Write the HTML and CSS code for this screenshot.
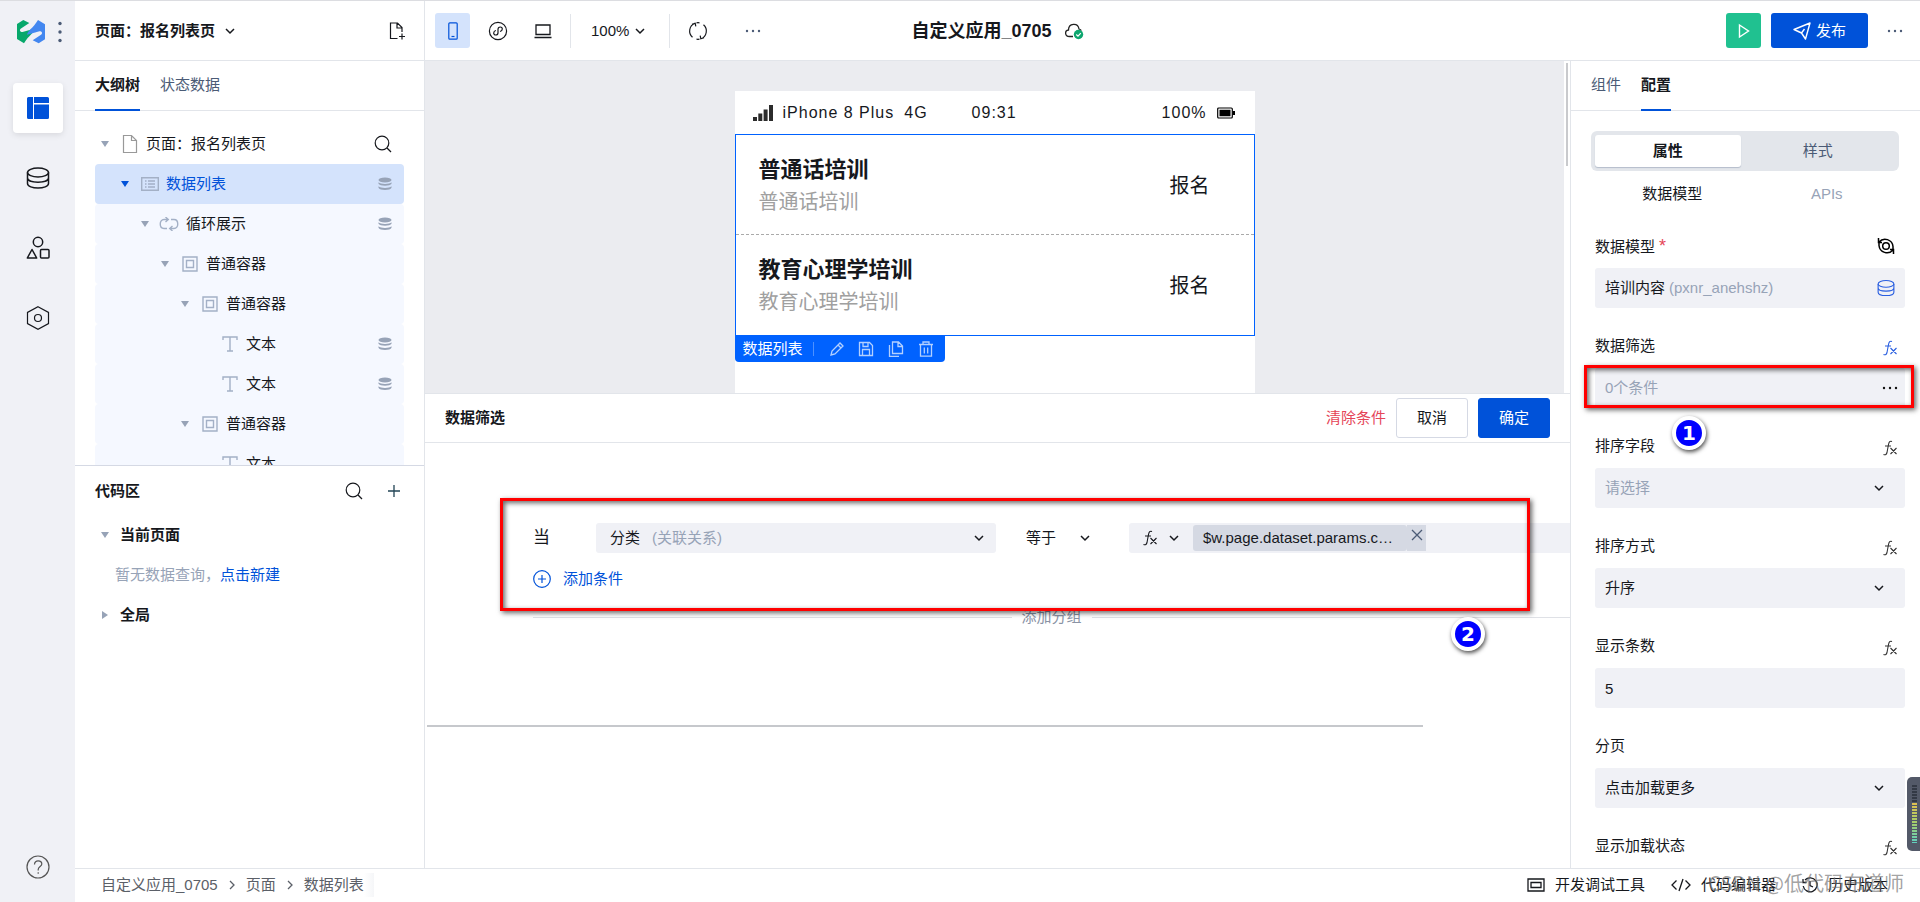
FILE: index.html
```html
<!DOCTYPE html>
<html lang="zh-CN">
<head>
<meta charset="utf-8">
<title>自定义应用_0705</title>
<link rel="stylesheet" href="styles.css">
</head>
<body>
<svg class="sprite" aria-hidden="true">
  <symbol id="chevron" viewBox="0 0 10 10"><path d="M1 3l4 4 4-4" fill="none" stroke="currentColor" stroke-width="1.500"/></symbol>
  <symbol id="next" viewBox="0 0 10 10"><path d="M3 1l4 4-4 4" fill="none" stroke="currentColor" stroke-width="1.300"/></symbol>
  <symbol id="caret" viewBox="0 0 8 8"><path d="M0 1h8L4 7z" fill="currentColor"/></symbol>
  <symbol id="caret-right" viewBox="0 0 8 8"><path d="M1 0v8l6-4z" fill="currentColor"/></symbol>
  <symbol id="dots" viewBox="0 0 18 4"><g fill="currentColor"><circle cx="3" cy="2" r="1.200"/><circle cx="9" cy="2" r="1.200"/><circle cx="15" cy="2" r="1.200"/></g></symbol>
  <symbol id="search" viewBox="0 0 18 18"><g fill="none" stroke="currentColor" stroke-width="1.200"><circle cx="8" cy="8" r="6.800"/><path d="M13 13l4 4"/></g></symbol>
  <symbol id="file" viewBox="0 0 16 20"><path d="M1.500 1.500h8l5 5v12h-13zM9.500 1.500v5h5" fill="none" stroke="currentColor" stroke-width="1.200"/></symbol>
  <symbol id="stack" viewBox="0 0 14 14"><g fill="currentColor"><ellipse cx="7" cy="3" rx="6.500" ry="2.500"/><path d="M.5 5.300c2 2.200 11 2.200 13 0v1.500c-1 2.600-12 2.600-13 0zM.5 9.300c2 2.200 11 2.200 13 0v1.500c-1 2.900-12 2.900-13 0z"/></g></symbol>
  <symbol id="database" viewBox="0 0 24 24"><g fill="none" stroke="currentColor" stroke-width="1.500"><ellipse cx="12" cy="6.500" rx="10.500" ry="4.500"/><path d="M1.500 6.500v11c0 6 21 6 21 0v-11M1.500 12c0 5.500 21 5.500 21 0"/></g></symbol>
  <symbol id="box" viewBox="0 0 16 16"><g fill="none" stroke="currentColor" stroke-width="1.400"><path d="M1 1h14v14H1z"/><path d="M4.500 4.500h7v7h-7z"/></g></symbol>
  <symbol id="letter" viewBox="0 0 16 16"><path d="M1 4V1h14v3M8 1v14M5 15h6" fill="none" stroke="currentColor" stroke-width="1.400"/></symbol>
  <symbol id="fx" viewBox="0 0 14 16"><path d="M9 1.500c-2-1-3 .5-3.500 3l-1.500 8c-.5 2-1.500 2.800-3.500 2M2 6h6M7.500 8l6 6M13.500 8l-6 6" fill="none" stroke="currentColor" stroke-width="1.100"/></symbol>
</svg>

<div class="app">
  <nav class="rail" aria-label="主导航">
    <div class="brand">
      <svg width="28" height="24" viewBox="0 0 28 24" role="img" aria-label="微搭"><path id="wing" d="M0 4L6.300 0l6 3L4 8.500c-2 1.500-1 3.500 1.500 3.500L18 8.500C17 13 12 15 7 23.300L0 19z" fill="#07a86b"/><path d="M28 19.300l-6.300 4-6-3 8.300-5.500c2-1.500 1-3.500-1.500-3.500L10 14.800C11 10.300 16 8.300 21 0l7 4.300z" fill="#4387f0"/></svg>
      <button class="icon-btn slate" aria-label="更多"><svg width="4" height="22" viewBox="0 0 4 22" fill="currentColor"><circle cx="2" cy="2.500" r="1.700"/><circle cx="2" cy="11" r="1.700"/><circle cx="2" cy="19.500" r="1.700"/></svg></button>
    </div>
    <button class="rail-btn active" aria-label="页面"><svg width="22" height="22" viewBox="0 0 22 22"><path d="M1.500 0H6v22H1.500Q0 22 0 20.500v-19Q0 0 1.500 0zM7 0h13.500Q22 0 22 1.500V6H7zM7 7.500h15v13q0 1.500-1.500 1.500H7z" fill="#0052d9"/></svg></button>
    <button class="rail-btn" aria-label="数据源"><svg width="24" height="24"><use href="#database"/></svg></button>
    <button class="rail-btn" aria-label="组件"><svg width="24" height="24" viewBox="0 0 24 24" fill="none" stroke="currentColor" stroke-width="1.500" stroke-linejoin="round"><circle cx="12" cy="6" r="4.700"/><path d="M6 13.500l4.700 8.500H1.300z"/><rect x="14.500" y="13.500" width="8.500" height="8.500" rx="1"/></svg></button>
    <button class="rail-btn" aria-label="设置"><svg width="24" height="24" viewBox="0 0 24 24" fill="none" stroke="currentColor" stroke-width="1.200"><path d="M12 .8l10.500 5.600v11.200L12 23.200 1.500 17.600V6.400z"/><circle cx="12" cy="12" r="3.500"/></svg></button>
    <button class="rail-btn help" aria-label="帮助"><svg width="24" height="24" viewBox="0 0 24 24" fill="none" stroke="#555" stroke-width="1.200"><circle cx="12" cy="12" r="11"/><path d="M8.500 9.500c0-5 7.300-4.300 7.300-.5 0 2.500-3.600 2.600-3.600 5.500v1M12.200 17.200v1.600"/></svg></button>
  </nav>

  <div class="main">
    <header class="topbar">
      <div class="lead">
        <div class="page-head">
          <button class="page-name">页面：报名列表页 <svg width="10" height="10"><use href="#chevron"/></svg></button>
          <button class="icon-btn" aria-label="新建页面"><svg width="18" height="18" viewBox="0 0 18 18" fill="none" stroke="currentColor" stroke-width="1.200"><path d="M9.500 16.500H2.500V1h7l4.500 4.500v4.500M9 1v5h5M14 11.500v6M11 14.500h6"/></svg></button>
        </div>
        <div class="tools">
          <button class="tool on" aria-label="手机"><svg width="10" height="18" viewBox="0 0 10 18" fill="none" stroke="#0052d9" stroke-width="1.200"><rect x=".8" y=".8" width="8.400" height="16.400" rx="1"/><path d="M3.500 14.500h3"/></svg></button>
          <button class="tool" aria-label="小程序"><svg width="20" height="20" viewBox="0 0 20 20" fill="none" stroke="currentColor" stroke-width="1.200"><circle cx="10" cy="10" r="8.600"/><path d="M8 9.500c-3 .5-3 4.500-.3 4.500 1.300 0 2.300-1 2.300-2.300V8.300C10 7 11 6 12.300 6c2.700 0 2.700 4-.3 4.500"/></svg></button>
          <button class="tool" aria-label="电脑"><svg width="20" height="16" viewBox="0 0 20 16" fill="none" stroke="currentColor" stroke-width="1.300"><path d="M3 2h14v9.500H3zM1.500 14.500h17"/></svg></button>
          <span class="rule"></span>
          <button class="zoom">100% <svg width="10" height="10"><use href="#chevron"/></svg></button>
          <span class="rule"></span>
          <button class="tool" aria-label="刷新"><svg width="20" height="20" viewBox="0 0 20 20" fill="none" stroke="currentColor" stroke-width="1.200"><path d="M7 2.200a8.300 8.300 0 0 0-2.500 14M8.500 18.200c1 .2 2 .2 3 0M13 17.800a8.300 8.300 0 0 0 2.500-14M11.500 1.800c-1-.2-2-.2-3 0M4 3.200L7.200 2.200 7.800 5.400M16 16.800l-3.200 1-.6-3.200"/></svg></button>
          <button class="tool slate" aria-label="更多工具"><svg width="18" height="4"><use href="#dots"/></svg></button>
        </div>
      </div>
      <h1 class="app-name">自定义应用_0705 <svg width="20" height="18" viewBox="0 0 20 18"><path d="M9 14.500H5.500C.5 14.500.5 8.500 4.500 8c0-7 9.500-7.500 10.500-1 1 .3 1.800.8 2.300 1.600" fill="none" stroke="#222" stroke-width="1.300"/><circle cx="14.500" cy="12.500" r="4.700" fill="#0ca66e"/><path d="M12.300 12.500l1.700 1.700 2.800-3" fill="none" stroke="#fff" stroke-width="1.200"/></svg></h1>
      <div class="actions">
        <button class="run" aria-label="预览"><svg width="12" height="16" viewBox="0 0 12 16"><path d="M1.500 2l9 6-9 6z" fill="none" stroke="#fff" stroke-width="1.400"/></svg></button>
        <button class="publish"><svg width="18" height="18" viewBox="0 0 18 18" fill="none" stroke="#fff" stroke-width="1.400" stroke-linejoin="round"><path d="M1 7.500L17 1l-4.500 16-4-6zM8.500 11l3-4M1 7.500l7.500 3.500"/></svg>发布</button>
        <button class="icon-btn slate" aria-label="更多操作"><svg width="18" height="4"><use href="#dots"/></svg></button>
      </div>
    </header>

    <div class="workspace">
      <aside class="outline">
        <div class="tabs" role="tablist">
          <button class="tab current" role="tab" aria-selected="true">大纲树</button>
          <button class="tab" role="tab">状态数据</button>
        </div>
        <div class="tree">
          <div class="node root"><svg class="caret" width="8" height="8"><use href="#caret"/></svg><svg class="file" width="16" height="20"><use href="#file"/></svg><span>页面：报名列表页</span><button class="icon-btn end" aria-label="搜索"><svg width="18" height="18"><use href="#search"/></svg></button></div>
          <div class="node d1 selected"><svg class="caret" width="8" height="8"><use href="#caret"/></svg><svg class="kind" width="18" height="14" viewBox="0 0 18 14" fill="none" stroke="currentColor" stroke-width="1.400"><path d="M.7.700h16.600v12.600H.7zM4 4h1.500M4 7h1.500M4 10h1.500M7 4h7M7 7h7M7 10h7"/></svg><span>数据列表</span><svg class="bound end" width="14" height="14"><use href="#stack"/></svg></div>
          <div class="node d2"><svg class="caret" width="8" height="8"><use href="#caret"/></svg><svg class="kind" width="20" height="14" viewBox="0 0 20 14" fill="none" stroke="currentColor" stroke-width="1.400"><path d="M8 11.500H5C0 11.500 0 2.500 5 2.500h4M6.500 0l2.800 2.500L6.500 5M12 2.500h3c5 0 5 9 0 9h-4M13.500 9l-2.800 2.500 2.800 2.500"/></svg><span>循环展示</span><svg class="bound end" width="14" height="14"><use href="#stack"/></svg></div>
          <div class="node d3"><svg class="caret" width="8" height="8"><use href="#caret"/></svg><svg class="kind" width="16" height="16"><use href="#box"/></svg><span>普通容器</span></div>
          <div class="node d4"><svg class="caret" width="8" height="8"><use href="#caret"/></svg><svg class="kind" width="16" height="16"><use href="#box"/></svg><span>普通容器</span></div>
          <div class="node leaf"><svg class="kind" width="16" height="16"><use href="#letter"/></svg><span>文本</span><svg class="bound end" width="14" height="14"><use href="#stack"/></svg></div>
          <div class="node leaf"><svg class="kind" width="16" height="16"><use href="#letter"/></svg><span>文本</span><svg class="bound end" width="14" height="14"><use href="#stack"/></svg></div>
          <div class="node d4"><svg class="caret" width="8" height="8"><use href="#caret"/></svg><svg class="kind" width="16" height="16"><use href="#box"/></svg><span>普通容器</span></div>
          <div class="node leaf"><svg class="kind" width="16" height="16"><use href="#letter"/></svg><span>文本</span></div>
        </div>
        <section class="code">
          <header class="code-head"><h2>代码区</h2>
            <button class="icon-btn" aria-label="搜索代码"><svg width="18" height="18"><use href="#search"/></svg></button>
            <button class="icon-btn" aria-label="添加代码"><svg width="12" height="12" viewBox="0 0 12 12"><path d="M6 0v12M0 6h12" stroke="#245" stroke-width="1.300"/></svg></button>
          </header>
          <div class="code-row"><svg class="caret" width="8" height="8"><use href="#caret"/></svg>当前页面</div>
          <p class="code-empty">暂无数据查询，<a href="#new">点击新建</a></p>
          <div class="code-row"><svg class="caret" width="8" height="8"><use href="#caret-right"/></svg>全局</div>
        </section>
      </aside>

      <main class="stage">
        <div class="canvas">
          <div class="backdrop">
            <div class="phone">
              <div class="status">
                <svg width="20" height="16" viewBox="0 0 20 16" fill="#2b2b2b"><path d="M0 12h4v4H0zM5.300 8.500h4V16h-4zM10.600 4.500h4V16h-4zM16 0h4v16h-4z"/></svg>
                <span class="device">iPhone 8 Plus</span><span class="network">4G</span><span>09:31</span><span class="charge">100%</span>
                <svg width="18" height="12" viewBox="0 0 18 12"><rect x=".7" y="1" width="14.600" height="10" rx="1" fill="none" stroke="#000" stroke-width="1.200"/><path d="M2.500 2.800h11v6.400h-11zM15.500 4H18v4h-2.500z"/></svg>
              </div>
              <div class="list">
                <article class="item"><div><h3>普通话培训</h3><p>普通话培训</p></div><span>报名</span></article>
                <article class="item"><div><h3>教育心理学培训</h3><p>教育心理学培训</p></div><span>报名</span></article>
              </div>
              <div class="selection-bar">
                <span class="sel-name">数据列表</span>
                <button aria-label="编辑"><svg width="14" height="14" viewBox="0 0 14 14"><path d="M1 13l1-4 8-8 3 3-8 8zM8 3l3 3" /></svg></button>
                <button aria-label="保存"><svg width="16" height="16" viewBox="0 0 16 16"><path d="M1.500 1.500h10l3 3v10h-13zM4.500 14V8.500h7V14M5 1.500v4h5v-4"/></svg></button>
                <button aria-label="复制"><svg width="16" height="16" viewBox="0 0 16 16"><path d="M4.500 1h6l4 4v7.500h-10zM10 1v4.500h4.500M1.500 4v11.300H11"/></svg></button>
                <button aria-label="删除"><svg width="16" height="16" viewBox="0 0 16 16"><path d="M1 3.500h14M5 3.500V1h6v2.500M2.500 3.500v11.700h11V3.500M6.300 6.500v6M9.700 6.500v6"/></svg></button>
              </div>
            </div>
          </div>
          <div class="track"><span class="thumb"></span></div>
        </div>

        <section class="filter">
          <header class="filter-head">
            <h2>数据筛选</h2>
            <button class="clear">清除条件</button>
            <button class="btn">取消</button>
            <button class="btn primary">确定</button>
          </header>
          <div class="filter-body">
            <div class="condition">
              <span class="when">当</span>
              <button class="field-pick">分类<span class="muted">(关联关系)</span><svg width="10" height="10"><use href="#chevron"/></svg></button>
              <div class="select operator"><select aria-label="运算符"><option>等于</option></select><svg width="10" height="10"><use href="#chevron"/></svg></div>
              <div class="value">
                <button class="mode" aria-label="表达式"><svg width="14" height="16"><use href="#fx"/></svg><svg width="10" height="10"><use href="#chevron"/></svg></button>
                <span class="chip">$w.page.dataset.params.c…</span><button class="chip-close" aria-label="移除"><svg width="12" height="12" viewBox="0 0 12 12"><path d="M1 1l10 10M11 1L1 11" stroke="currentColor" stroke-width="1.300"/></svg></button>
              </div>
            </div>
            <button class="add"><svg width="18" height="18" viewBox="0 0 18 18" fill="none" stroke="currentColor" stroke-width="1.200"><circle cx="9" cy="9" r="8.300"/><path d="M9 5v8M5 9h8"/></svg>添加条件</button>
            <div class="group"><button>添加分组</button></div>
            <div class="hscroll"></div>
            <div class="mark mark-filter"></div>
            <span class="badge badge-two">2</span>
          </div>
        </section>
      </main>

      <aside class="props">
        <div class="tabs" role="tablist">
          <button class="tab" role="tab">组件</button>
          <button class="tab current" role="tab" aria-selected="true">配置</button>
        </div>
        <div class="segment"><button class="on">属性</button><button class="off">样式</button></div>
        <div class="source"><button class="on">数据模型</button><button>APIs</button></div>
        <form class="form">
          <div class="row"><span class="label">数据模型<i>*</i></span><svg class="swap" width="18" height="18" viewBox="0 0 18 18" fill="none" stroke="#000" stroke-width="1.500"><path d="M1.500 1v4.500H5M2 5a8 8 0 0 1 14 4.500V14M16.500 17v-4.500H13M16 13A8 8 0 0 1 2 8.500V6"/><circle cx="9" cy="9" r="3.300"/></svg></div>
          <button type="button" class="input model">培训内容 <span class="muted">(pxnr_anehshz)</span><svg width="18" height="18"><use href="#database"/></svg></button>

          <div class="row"><span class="label">数据筛选</span><svg class="fx on" width="14" height="16"><use href="#fx"/></svg></div>
          <div class="marked"><button type="button" class="input rules muted">0个条件<svg width="18" height="4"><use href="#dots"/></svg></button><div class="mark mark-rules"></div><span class="badge badge-one">1</span></div>

          <div class="row"><label for="sort">排序字段</label><svg class="fx" width="14" height="16"><use href="#fx"/></svg></div>
          <div class="select"><select id="sort" class="input muted"><option>请选择</option></select><svg width="10" height="10"><use href="#chevron"/></svg></div>

          <div class="row"><label for="order">排序方式</label><svg class="fx" width="14" height="16"><use href="#fx"/></svg></div>
          <div class="select"><select id="order" class="input"><option>升序</option></select><svg width="10" height="10"><use href="#chevron"/></svg></div>

          <div class="row"><label for="count">显示条数</label><svg class="fx" width="14" height="16"><use href="#fx"/></svg></div>
          <input id="count" class="input" type="text" value="5">

          <div class="row"><label for="paging">分页</label></div>
          <div class="select"><select id="paging" class="input"><option>点击加载更多</option></select><svg width="10" height="10"><use href="#chevron"/></svg></div>

          <div class="row"><span class="label">显示加载状态</span><svg class="fx" width="14" height="16"><use href="#fx"/></svg></div>
        </form>
        <div class="meter"><span></span></div>
      </aside>
    </div>

    <footer class="footer">
      <nav class="crumbs" aria-label="路径"><a href="#app">自定义应用_0705</a><svg width="10" height="10"><use href="#next"/></svg><a href="#page">页面</a><svg width="10" height="10"><use href="#next"/></svg><a class="last" href="#list">数据列表</a></nav>
      <div class="links">
        <button><svg width="18" height="14" viewBox="0 0 18 14" fill="none" stroke="currentColor" stroke-width="1.300"><path d="M1 1h16v12H1zM4 4.500h10v5H4z"/></svg>开发调试工具</button>
        <button><svg width="20" height="14" viewBox="0 0 20 14" fill="none" stroke="currentColor" stroke-width="1.300"><path d="M5.500 2.500L1 7l4.500 4.500M14.500 2.500L19 7l-4.500 4.500M12 1L8 13"/></svg>代码编辑器</button>
        <button><svg width="16" height="16" viewBox="0 0 16 16" fill="none" stroke="currentColor" stroke-width="1.300"><path d="M3 3a7 7 0 1 1-1.800 6M1 2v3.500h3.500M8 4v4.500l3 1.500"/></svg>历史版本</button>
      </div>
      <span class="watermark">CSDN @低代码布道师</span>
    </footer>
  </div>
</div>
</body>
</html>
```

FILE: styles.css
```css
* { box-sizing: border-box; }
body { margin: 0; font: 15px/20px "Liberation Sans", "Noto Sans CJK SC", sans-serif; color: #16181d; background: #fff; }
button, select, input { font: inherit; color: inherit; background: none; border: 0; padding: 0; margin: 0; }
h1, h2, h3, p { margin: 0; font-size: inherit; }
a { color: inherit; text-decoration: none; }
svg { display: block; flex: none; }
.sprite { position: absolute; width: 0; height: 0; }
.muted { color: #97a3b7; }
.slate { color: #4b5b76; }
.icon-btn { display: flex; align-items: center; }

.app { display: flex; height: 100vh; border-top: 1px solid #dcdde1; overflow: hidden; }

.rail { width: 75px; flex: none; display: flex; flex-direction: column; align-items: center; gap: 20px; padding-bottom: 10px; background: #f0f1f6; }
.brand { display: flex; align-items: center; gap: 13px; height: 62px; padding-left: 4px; }
.rail-btn { width: 50px; height: 50px; display: grid; place-items: center; border-radius: 4px; }
.rail-btn.active { background: #fff; box-shadow: 0 2px 6px rgba(0, 0, 0, .1); }
.rail-btn.help { margin-top: auto; }

.main { flex: 1; min-width: 0; display: flex; flex-direction: column; }

.topbar { height: 60px; flex: none; display: grid; grid-template-columns: 1fr auto 1fr; border-bottom: 1px solid #e2e5ea; }
.lead { display: flex; }
.page-head { width: 350px; flex: none; display: flex; align-items: center; justify-content: space-between; padding: 0 18px 0 20px; border-right: 1px solid #e2e5ea; }
.page-name { display: flex; align-items: center; gap: 10px; font-weight: 700; }
.tools { display: flex; align-items: center; gap: 10px; padding-left: 10px; }
.tool { width: 35px; height: 35px; display: grid; place-items: center; border-radius: 3px; }
.tool.on { background: #d4e3fc; }
.rule { width: 1px; height: 34px; background: #e2e5ea; }
.tools .rule + .tool { margin-right: 10px; }
.zoom { display: flex; align-items: center; gap: 6px; padding: 0 14px 0 10px; }
.app-name { display: flex; align-items: center; gap: 12px; font-size: 18px; }
.actions { display: flex; align-items: center; justify-content: flex-end; gap: 10px; padding-right: 16px; }
.run { width: 35px; height: 35px; display: grid; place-items: center; border-radius: 3px; background: #20c190; }
.publish { width: 97px; height: 35px; display: flex; align-items: center; justify-content: center; gap: 5px; border-radius: 3px; background: #0052d9; color: #fff; margin-right: 8px; }

.workspace { flex: 1; min-height: 0; display: flex; }

.tabs { height: 50px; flex: none; display: flex; gap: 20px; padding: 0 20px; border-bottom: 1px solid #e2e5ea; }
.tab { height: 50px; border-bottom: 2px solid transparent; color: #4b5b76; }
.tab.current { color: #16181d; font-weight: 700; border-color: #0052d9; }

.outline { width: 350px; flex: none; display: flex; flex-direction: column; border-right: 1px solid #e2e5ea; }
.tree { height: 355px; flex: none; overflow: hidden; padding: 13px 20px 0; border-bottom: 1px solid #d5d9e4; }
.node { height: 40px; display: flex; align-items: center; padding: 0 12px 0 26px; border-radius: 4px; background: #f5f8ff; }
.caret { color: #97a3b7; }
.kind { color: #a3b0c6; margin: 0 7px 0 12px; }
.end { margin-left: auto; }
.bound { color: #97a3b7; }
.node.root { background: none; padding-left: 6px; }
.file { color: #999; margin: 0 8px 0 13px; }
.d1.selected { background: #d4e3fc; color: #0052d9; }
.d1 .caret { color: #0052d9; }
.d2 { padding-left: 46px; }
.d2 .kind { margin: 0 7px 0 10px; }
.d3 { padding-left: 66px; }
.d3 .kind, .d4 .kind { margin: 0 8px 0 13px; }
.d4 { padding-left: 86px; }
.leaf { padding-left: 127px; }
.leaf .kind { margin: 0 8px 0 0; }

.code { padding: 0 20px; }
.code-head { height: 49px; display: flex; align-items: center; gap: 25px; padding-right: 4px; }
.code-head h2 { margin-right: auto; }
.code-row { height: 40px; display: flex; align-items: center; gap: 11px; padding-left: 6px; font-weight: 700; }
.code-empty { height: 40px; line-height: 40px; padding-left: 20px; color: #97a3b7; }
.code-empty a { color: #0052d9; }

.stage { flex: 1; min-width: 0; display: flex; flex-direction: column; }
.canvas { height: 332px; flex: none; display: flex; overflow: hidden; }
.backdrop { flex: 1; display: flex; justify-content: center; padding-top: 30px; background: #ebecf0; }
.phone { width: 520px; height: 400px; background: #fff; }
.status { height: 43px; display: flex; align-items: center; padding: 0 20px 0 18px; font-size: 16px; letter-spacing: 1px; }
.device { margin-left: 10px; }
.network { margin: 0 44px 0 10px; }
.charge { margin: 0 10px 0 auto; }
.list { border: 1px solid #0062ff; }
.item { height: 99px; display: flex; align-items: center; justify-content: space-between; padding: 2px 44px 0 23px; font-size: 20px; }
.item + .item { height: 101px; border-top: 1px dashed #aaa; }
.item h3 { font-size: 22px; line-height: 33px; }
.item p { line-height: 33px; color: #a0a0a0; }
.selection-bar { width: 210px; height: 26px; display: flex; align-items: center; gap: 14px; padding: 0 11px 0 8px; border-radius: 0 0 4px 4px; background: #0062ff; color: #fff; }
.sel-name { padding-right: 10px; border-right: 1px solid #4d91ff; line-height: 14px; margin-right: 2px; white-space: nowrap; }
.selection-bar svg { fill: none; stroke: #b3d0ff; stroke-width: 1.300; }
.track { width: 6px; flex: none; padding: 2px 2px 0; }
.thumb { display: block; height: 103px; background: #c9cacd; }

.filter { flex: 1; min-height: 0; display: flex; flex-direction: column; border-top: 1px solid #e2e5ea; }
.filter-head { height: 49px; flex: none; display: flex; align-items: center; gap: 10px; padding: 0 20px; border-bottom: 1px solid #e2e5ea; }
.filter-head h2 { margin-right: auto; }
.clear { color: #e54558; }
.btn { width: 72px; height: 40px; border: 1px solid #d5d9e4; border-radius: 3px; }
.btn.primary { background: #0052d9; border-color: #0052d9; color: #fff; }
.filter-body { flex: 1; position: relative; padding: 80px 0 0 108px; }
.condition { height: 30px; display: flex; align-items: center; gap: 30px; }
.when { width: 33px; font-size: 17px; }
.field-pick { width: 400px; height: 30px; display: flex; align-items: center; gap: 12px; padding: 0 12px 0 14px; border-radius: 3px; background: #f0f1f6; }
.field-pick svg { margin-left: auto; }
.select { position: relative; }
.select select { width: 100%; appearance: none; }
.select svg { position: absolute; right: 21px; top: 50%; margin-top: -5px; pointer-events: none; }
.operator { width: 73px; flex: none; }
.select.operator svg { right: 9px; }
.value { flex: 1; height: 30px; display: flex; align-items: center; border-radius: 3px 0 0 3px; background: #f0f1f6; }
.mode { width: 64px; display: flex; align-items: center; gap: 12px; padding-left: 14px; }
.chip { height: 26px; line-height: 26px; padding: 0 14px 0 10px; border-radius: 3px; background: #d5d9e3; white-space: nowrap; }
.chip-close { width: 19px; height: 26px; display: grid; justify-items: center; align-items: start; padding-top: 4px; background: #d5d9e3; color: #4b5b76; }
.add { height: 30px; margin-top: 11px; display: flex; align-items: center; gap: 12px; color: #0052d9; }
.group { margin-top: 13px; display: flex; align-items: center; gap: 10px; }
.group::before, .group::after { content: ""; flex: 478; height: 1px; background: #dfe1e6; }
.group button { color: #8a93a5; }
.hscroll { width: 96%; height: 2px; margin: 98px 0 0 -106px; background: #c6c8cc; }

.mark { position: absolute; border: 3px solid #f00; pointer-events: none; box-shadow: 2px 2px 5px rgba(0, 0, 0, .6), inset 2px 2px 5px rgba(0, 0, 0, .6); }
.mark-filter { left: 75px; right: 40px; top: 55px; height: 113px; }
.mark-rules { inset: -3px -9px 0 -11px; }
.badge { position: absolute; width: 34px; height: 34px; display: grid; place-items: center; border: 4px solid #fff; border-radius: 50%; background: #00f; color: #fff; font: 700 20px/20px "DejaVu Sans", sans-serif; box-shadow: 1px 2px 4px rgba(0, 0, 0, .7); }
.badge-two { right: 85px; top: 174px; }
.badge-one { left: 77px; top: 48px; }

.props { width: 350px; flex: none; position: relative; border-left: 1px solid #e2e5ea; overflow: hidden; }
.segment { display: flex; height: 40px; margin: 20px 21px 0 20px; padding: 4px; border-radius: 6px; background: #e3e6eb; }
.segment .on { flex: 17; border-radius: 3px; background: #fff; font-weight: 700; box-shadow: 0 1px 1px #b4bccb; }
.segment .off { flex: 18; color: #4b5b76; }
.source { display: flex; height: 46px; padding: 0 16px 0 24px; }
.source button { flex: 1; color: #97a3b7; }
.source .on { color: #16181d; }
.form { padding: 0 15px 0 24px; }
.row { height: 60px; display: flex; align-items: center; justify-content: space-between; padding: 16px 8px 0 0; }
.row:first-child { height: 51px; padding: 7px 10px 0 0; }
.row i { margin-left: 4px; color: #e54558; font-style: normal; font-size: 18px; }
.fx { color: #333; margin-top: 4px; }
.fx.on { color: #2a5fe0; }
.input { display: block; width: 100%; height: 40px; padding: 0 10px; border-radius: 3px; background: #f0f1f6; }
.model, .rules { display: flex; align-items: center; }
.model .muted { margin-left: 4px; }
.input svg { margin-left: auto; }
.model svg { color: #2a5fe0; }
.rules { padding-right: 6px; }
.rules svg { color: #111; }
.marked { position: relative; }
.meter { position: absolute; right: 0; bottom: 17px; width: 13px; height: 74px; padding: 8px 3px 8px 5px; border-radius: 5px 0 0 5px; background: #535968; }
.meter span { display: block; height: 58px; background: repeating-linear-gradient(transparent 0 2px, #535968 2px 3px), linear-gradient(#333945 30%, #e0c050 31%, #a5cf6a 65%, #5fd0c0); }

.footer { height: 34px; flex: none; position: relative; display: flex; align-items: center; justify-content: space-between; padding: 0 32px 2px 26px; border-top: 1px solid #e2e5ea; }
.crumbs { display: flex; align-items: center; gap: 9px; color: #5b6068; }
.crumbs .last { padding: 2px 10px 2px 0; background: linear-gradient(90deg, #fff 60px, #f5f6f8 70px); }
.links { display: flex; gap: 26px; }
.links button { display: flex; align-items: center; gap: 10px; }
.watermark { position: absolute; right: 16px; top: 1px; font: 20px/26px "Noto Sans CJK SC", sans-serif; color: rgba(110, 110, 110, .65); }
```
